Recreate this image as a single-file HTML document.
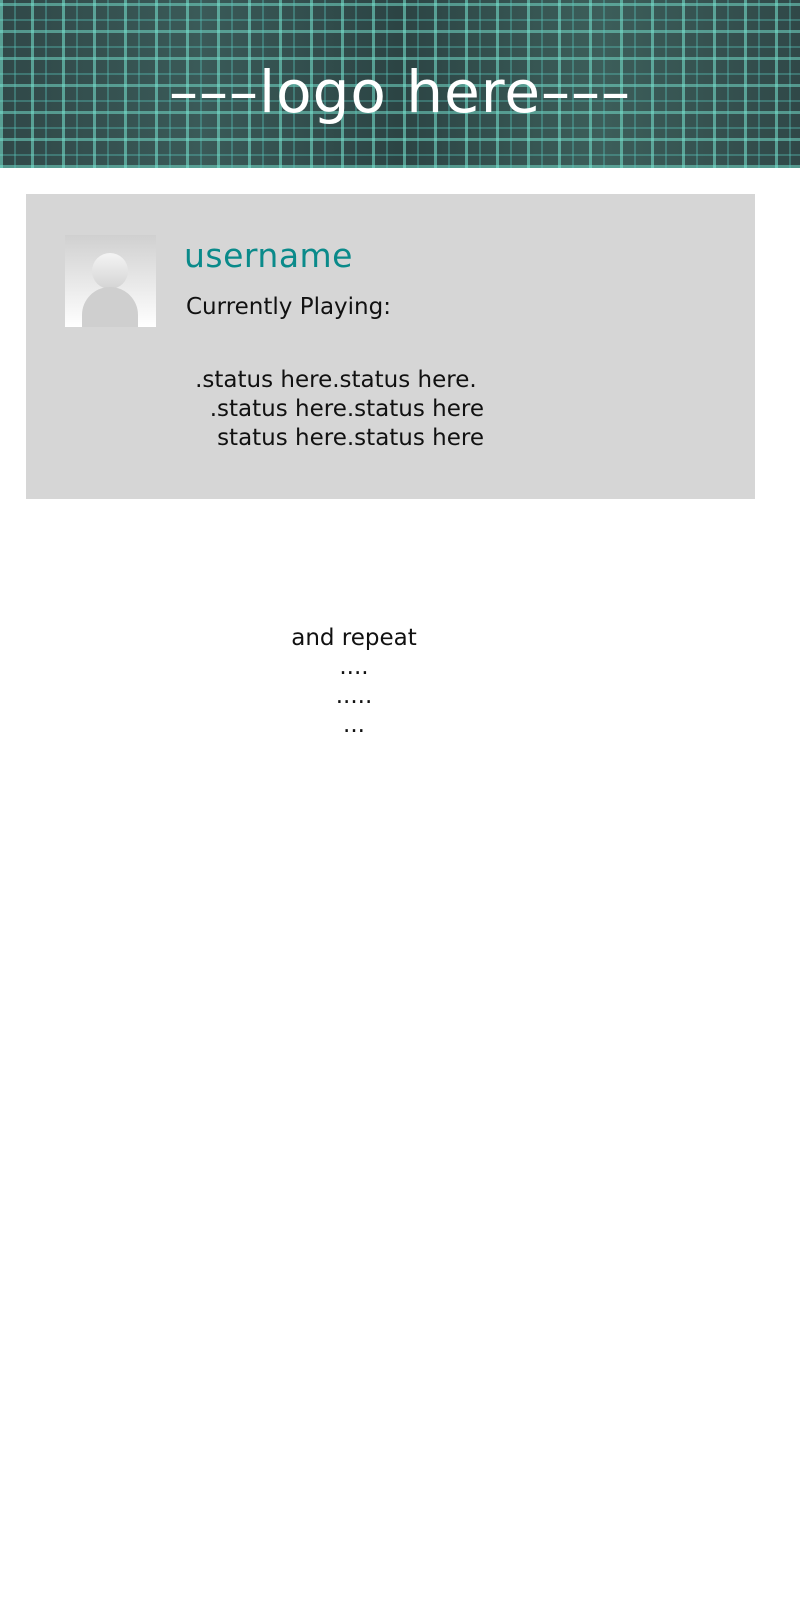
<!DOCTYPE html>
<html><head><meta charset="utf-8"><style>
body{margin:0;width:800px;height:1600px;background:#fff;font-family:"DejaVu Sans",sans-serif;overflow:hidden;position:relative}
.hdr{position:absolute;left:0;top:0;width:800px;height:168px;background:#2a3a3a;
background-image:
repeating-linear-gradient(90deg,rgba(120,230,210,.55) 0 3px,transparent 3px 14px,rgba(90,200,190,.35) 14px 16px,transparent 16px 31px),
repeating-linear-gradient(0deg,rgba(120,230,210,.5) 0 3px,transparent 3px 12px,rgba(90,200,190,.35) 12px 14px,transparent 14px 27px),
linear-gradient(90deg,#304848,#3a5a58,#2c4444,#3c5e5a,#304848);}
.logo{position:absolute;left:0;width:800px;top:54px;text-align:center;color:#fff;font-size:58px;line-height:76px;letter-spacing:1px}
.card{position:absolute;left:26px;top:194px;width:729px;height:305px;background:#d6d6d6}
.av{position:absolute;left:39px;top:41px;width:91px;height:92px;background:linear-gradient(#d0d0d0,#fff);overflow:hidden}
.head{position:absolute;left:27px;top:18px;width:36px;height:36px;border-radius:50%;background:linear-gradient(#f4f4f4,#d4d4d4)}
.body{position:absolute;left:17px;top:52px;width:56px;height:60px;border-radius:28px 28px 0 0;background:#cfcfcf}
.un{position:absolute;left:158px;top:42px;color:#0a8a8a;font-size:33px;letter-spacing:0.5px}
.cp{position:absolute;left:160px;top:100px;font-size:23px;color:#111}
.st{position:absolute;left:120px;top:172px;width:338px;text-align:right;font-size:23px;line-height:29px;color:#111}
.rep{position:absolute;left:254px;top:624px;width:200px;text-align:center;font-size:23px;line-height:29px;color:#111}
</style></head><body>
<div class="hdr"></div>
<div class="logo">–––logo here–––</div>
<div class="card">
<div class="av"><div class="head"></div><div class="body"></div></div>
<div class="un">username</div>
<div class="cp">Currently Playing:</div>
<div class="st">.status here.status here.&nbsp;<br>.status here.status here<br>status here.status here</div>
</div>
<div class="rep">and repeat<br>....<br>.....<br>...</div>
</body></html>
